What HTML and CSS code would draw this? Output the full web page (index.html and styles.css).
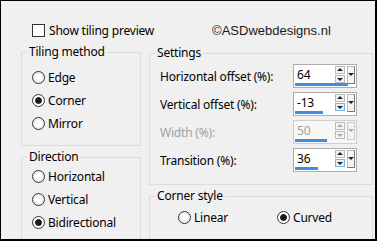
FILE: index.html
```html
<!DOCTYPE html>
<html lang="en">
<head>
  <meta charset="UTF-8">
  <title>Tiling</title>
  <link rel="stylesheet" href="styles.css">
</head>
<body>

  <div class="frame">

    <div class="topbar">
      <label class="check"><input type="checkbox"> Show tiling preview</label>
      <span class="mark">©ASDwebdesigns.nl</span>
    </div>

    <div class="columns">

      <div class="col">
        <fieldset class="group tiling">
          <legend>Tiling method</legend>
          <label class="opt"><input type="radio" name="method"> Edge</label>
          <label class="opt"><input type="radio" name="method" checked> Corner</label>
          <label class="opt"><input type="radio" name="method"> Mirror</label>
        </fieldset>

        <fieldset class="group direction">
          <legend>Direction</legend>
          <label class="opt"><input type="radio" name="dir"> Horizontal</label>
          <label class="opt"><input type="radio" name="dir"> Vertical</label>
          <label class="opt"><input type="radio" name="dir" checked> Bidirectional</label>
        </fieldset>
      </div>

      <div class="col">
        <fieldset class="group settings">
          <legend>Settings</legend>

          <div class="row">
            <span>Horizontal offset (%):</span>
            <div class="spin">
              <span class="val">64</span>
              <span class="bar" style="width:53px"></span>
              <span class="arrows"><i class="up"></i><i class="down"></i></span>
              <span class="drop"></span>
            </div>
          </div>

          <div class="row">
            <span>Vertical offset (%):</span>
            <div class="spin">
              <span class="val">-13</span>
              <span class="bar" style="width:28px"></span>
              <span class="arrows"><i class="up"></i><i class="down hot"></i></span>
              <span class="drop"></span>
            </div>
          </div>

          <div class="row off">
            <span>Width (%):</span>
            <div class="spin">
              <span class="val">50</span>
              <span class="bar" style="width:32px"></span>
              <span class="arrows"><i class="up"></i><i class="down"></i></span>
              <span class="drop"></span>
            </div>
          </div>

          <div class="row">
            <span>Transition (%):</span>
            <div class="spin">
              <span class="val">36</span>
              <span class="bar" style="width:23px"></span>
              <span class="arrows"><i class="up"></i><i class="down hot"></i></span>
              <span class="drop"></span>
            </div>
          </div>
        </fieldset>

        <fieldset class="group corner">
          <legend>Corner style</legend>
          <div class="pair">
            <label class="opt"><input type="radio" name="corner"> Linear</label>
            <label class="opt"><input type="radio" name="corner" checked> Curved</label>
          </div>
        </fieldset>
      </div>

    </div>
  </div>

</body>
</html>
```

FILE: styles.css
```css
* {
  box-sizing: border-box;
}

body {
  margin: 0;
  font-family: "Noto Sans", sans-serif;
  font-size: 12px;
  letter-spacing: -0.2px;
  color: #000;
}

.frame {
  width: 377px;
  height: 241px;
  border: solid #000;
  border-width: 1px 2px 2px 1px;
  background: #f0f0f0;
  padding-left: 20px;
  overflow: hidden;
}

.topbar {
  display: flex;
  align-items: center;
  height: 24px;
  margin-top: 17px;
  padding-left: 11px;
}

.check {
  display: flex;
  align-items: center;
  gap: 4px;
}

.mark {
  margin-left: 58px;
  font-family: "Liberation Sans", sans-serif;
  font-size: 13px;
  letter-spacing: 0;
  color: #1a1a1a;
}

.columns {
  display: grid;
  grid-template-columns: 120px 224px;
  gap: 8px;
  margin-top: 2px;
}

.col {
  display: flex;
  flex-direction: column;
}

.group {
  margin: 0;
  padding: 0;
  min-width: 0;
  border: 1px solid #dcdcdc;
}

.group legend {
  margin-left: 5px;
  padding: 0 2px;
  line-height: 16px;
}

input[type=checkbox],
input[type=radio] {
  appearance: none;
  margin: 0;
  width: 13px;
  height: 13px;
  border: 1px solid #333;
  background: #fff;
  flex: none;
}

input[type=radio] {
  border-radius: 50%;
  padding: 2px;
  background-clip: content-box;
}

input[type=radio]:checked {
  background: #1a1a1a content-box;
  box-shadow: inset 0 0 0 2px #fff;
}

.opt {
  display: flex;
  align-items: center;
  gap: 3px;
  height: 23px;
  padding-left: 10px;
}

.tiling {
  height: 102px;
  padding-top: 6px;
}

.direction {
  height: 110px;
  margin-top: 3px;
}

.settings {
  height: 140px;
  margin-top: 1px;
  padding: 3px 15px 0 0;
  display: flex;
  flex-direction: column;
  gap: 4px;
}

.row {
  display: flex;
  justify-content: space-between;
  align-items: center;
  height: 24px;
  margin-left: 10px;
}

.row.off {
  color: #a0a0a0;
}

.spin {
  position: relative;
  display: flex;
  width: 64px;
  height: 24px;
  border: 1px solid #adadad;
  background: #fff;
  padding: 1px 1px 0 0;
}

.off .spin {
  border-color: #cfcfcf;
  background: #f7f7f7;
}

.val {
  flex: 1;
  padding-left: 3px;
  line-height: 18px;
}

.bar {
  position: absolute;
  left: 1px;
  bottom: 1px;
  height: 3px;
  background: #3d8ee2;
}

.arrows {
  display: flex;
  flex-direction: column;
  gap: 1px;
  width: 10px;
  margin-right: 2px;
}

.arrows i {
  position: relative;
  height: 8px;
  border: 1px solid #bbb;
  background: #f4f4f4;
}

.arrows i.hot {
  border-color: #7ab1e6;
  background: #e5f1fb;
}

.arrows i::after {
  content: "";
  position: absolute;
  left: 1px;
  border-left: 3px solid transparent;
  border-right: 3px solid transparent;
}

.up::after {
  top: 1px;
  border-bottom: 3px solid #222;
}

.down::after {
  top: 2px;
  border-top: 3px solid #222;
}

.drop {
  position: relative;
  width: 8px;
  height: 18px;
  border: 1px solid #bbb;
  border-right-color: #777;
  border-bottom-color: #777;
  background: #f4f4f4;
}

.drop::after {
  content: "";
  position: absolute;
  left: 0;
  top: 6px;
  border-left: 3px solid transparent;
  border-right: 3px solid transparent;
  border-top: 3px solid #222;
}

.off .arrows i::after,
.off .drop::after {
  border-top-color: #aaa;
  border-bottom-color: #aaa;
}

.off .drop {
  border-color: #ccc;
}

.corner {
  height: 60px;
  margin-top: 3px;
  padding-top: 2px;
}

.pair {
  display: flex;
  padding-left: 18px;
}

.pair .opt {
  width: 99px;
}
```
